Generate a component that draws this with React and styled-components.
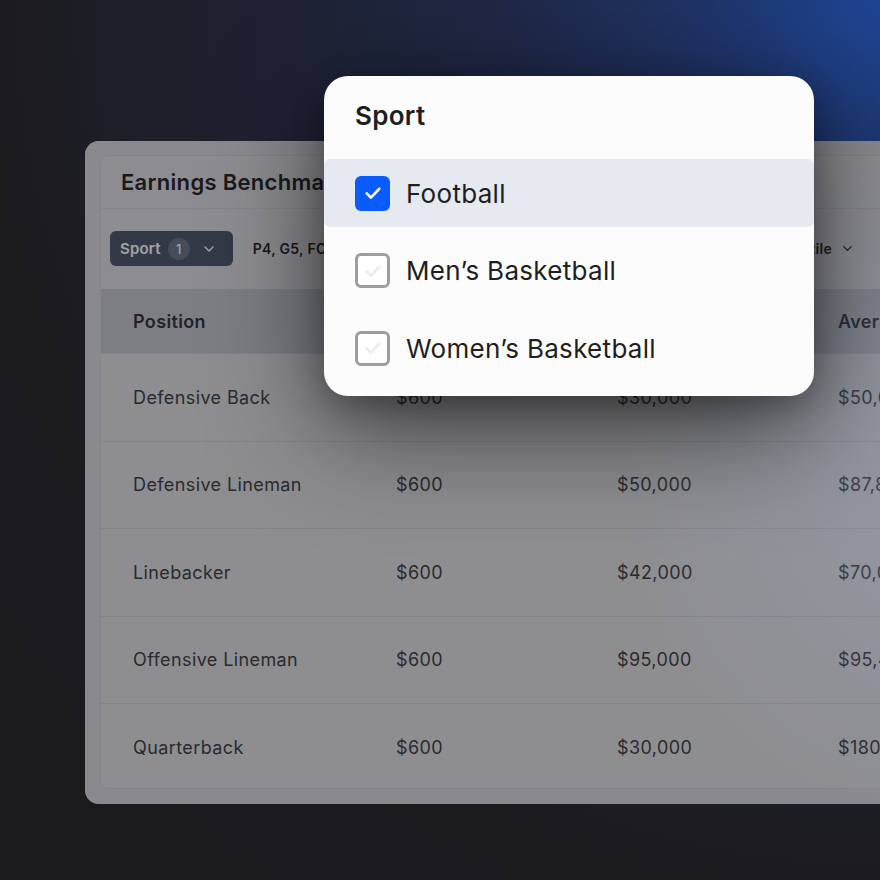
import React from 'react';
import styled, { createGlobalStyle } from 'styled-components';
import { ChevronDown } from 'lucide-react';

const GlobalStyle = createGlobalStyle`
  html, body {
    margin: 0;
    padding: 0;
    width: 880px;
    height: 880px;
    overflow: hidden;
  }
  body {
    font-family: Inter, "Noto Sans", sans-serif;
    background: #1b1b1e;
    -webkit-font-smoothing: antialiased;
  }
  #root {
    width: 880px;
    height: 880px;
  }
`;

const Stage = styled.div`
  position: relative;
  width: 880px;
  height: 880px;
  overflow: hidden;
  box-sizing: border-box;
  padding: 141px 0 0 85px;
  background: radial-gradient(
    circle farthest-corner at 100% 0%,
    #1e4595 0%,
    #1f3366 15%,
    #1f2846 30%,
    #1e2131 50%,
    #1c1c20 70%,
    #1b1b1e 100%
  );
`;

const Panel = styled.section`
  position: relative;
  width: 1100px;
  height: 663px;
  box-sizing: border-box;
  padding: 14px 15px 15px;
  background: #d9d9dc;
  border-radius: 14px;
  overflow: hidden;
`;

const Card = styled.div`
  height: 100%;
  box-sizing: border-box;
  display: flex;
  flex-direction: column;
  background: #dedee1;
  border: 1px solid #cfcfd5;
  border-radius: 8px;
  overflow: hidden;
`;

const CardHeader = styled.header`
  height: 52px;
  flex: none;
  display: flex;
  align-items: center;
  padding-left: 20px;
  border-bottom: 1px solid #cfcfd5;
`;

const Title = styled.h1`
  margin: 0;
  font-size: 22px;
  font-weight: 600;
  color: #1e1e20;
  letter-spacing: 0.3px;
`;

const FilterBar = styled.div`
  flex: none;
  display: flex;
  align-items: center;
  gap: 20px;
  padding: 22px 9px 23px;
`;

const Chip = styled.button`
  display: flex;
  align-items: center;
  gap: 7px;
  height: 35px;
  padding: 0 16px 0 10px;
  border: none;
  border-radius: 6px;
  background: #4a5368;
  color: #ffffff;
  font-family: inherit;
  font-size: 15px;
  font-weight: 600;
  letter-spacing: 0.2px;
`;

const Badge = styled.span`
  display: inline-flex;
  align-items: center;
  justify-content: center;
  width: 22px;
  height: 22px;
  border-radius: 50%;
  background: #6a7286;
  font-size: 13px;
  font-weight: 500;
  margin-right: 4px;
`;

const FilterItem = styled.div`
  display: flex;
  align-items: center;
  gap: 8px;
  white-space: nowrap;
  font-size: 14px;
  font-weight: 600;
  letter-spacing: 0.3px;
  color: #1e1e20;
`;

const Grid = styled.div`
  display: grid;
  grid-template-columns: 263px 221px 221px 221px 1fr;
`;

const HeadCell = styled.div`
  height: 64px;
  display: flex;
  align-items: center;
  padding-left: 32px;
  background: #c3c5cb;
  font-size: 18px;
  font-weight: 600;
  letter-spacing: 0.35px;
  color: #2e2e30;
  white-space: nowrap;
  overflow: hidden;
`;

const Cell = styled.div`
  height: 87.5px;
  box-sizing: border-box;
  display: flex;
  align-items: center;
  padding-left: 32px;
  border-top: 1px solid #ceced6;
  background: #dfdfe1;
  font-size: 18px;
  font-weight: 400;
  letter-spacing: 0.4px;
  color: #3a3a3c;
  white-space: nowrap;
  overflow: hidden;
`;

const Scrim = styled.div`
  position: absolute;
  inset: 0;
  pointer-events: none;
  background:
    radial-gradient(circle 340px at 880px 340px, rgba(170, 188, 235, 0.22), rgba(170, 188, 235, 0) 100%),
    rgba(20, 20, 26, 0.4);
`;

const Menu = styled.div`
  position: absolute;
  left: 324px;
  top: 76px;
  width: 490px;
  height: 320px;
  box-sizing: border-box;
  padding: 24px 0 0;
  background: #fcfcfc;
  border-radius: 24px;
  box-shadow: 0 30px 110px rgba(0, 0, 0, 0.62), 0 10px 32px rgba(0, 0, 0, 0.24);
`;

const MenuTitle = styled.div`
  padding-left: 31px;
  height: 32px;
  line-height: 32px;
  font-size: 26px;
  font-weight: 600;
  letter-spacing: 0.3px;
  color: #1f1f21;
`;

const OptionList = styled.div`
  margin-top: 27px;
  display: flex;
  flex-direction: column;
  gap: 9.5px;
`;

const Option = styled.label`
  height: 68px;
  display: flex;
  align-items: center;
  gap: 16px;
  padding-left: 31px;
  border-radius: 6px;
  background: ${(p) => (p.$active ? '#e6e9f0' : 'transparent')};
  font-size: 26px;
  font-weight: 400;
  letter-spacing: 0.3px;
  color: #1f1f21;
`;

const Box = styled.span`
  width: 35px;
  height: 35px;
  box-sizing: border-box;
  flex: none;
  display: flex;
  align-items: center;
  justify-content: center;
  border-radius: 6px;
  background: ${(p) => (p.$checked ? '#0a5cff' : '#ffffff')};
  border: ${(p) => (p.$checked ? 'none' : '3px solid #9e9ea0')};
`;

const Check = ({ color }) => (
  <svg width="20" height="20" viewBox="0 0 24 24" fill="none">
    <path d="M4.5 12.5l5 5L19.5 7" stroke={color} strokeWidth="3.2" strokeLinecap="round" strokeLinejoin="round" />
  </svg>
);

const rows = [
  ['Defensive Back', '$600', '$30,000', '$50,000', '$120,000'],
  ['Defensive Lineman', '$600', '$50,000', '$87,800', '$210,000'],
  ['Linebacker', '$600', '$42,000', '$70,000', '$165,000'],
  ['Offensive Lineman', '$600', '$95,000', '$95,400', '$240,000'],
  ['Quarterback', '$600', '$30,000', '$180,000', '$950,000'],
];

const headers = ['Position', 'Minimum', 'Median', 'Average', 'Maximum'];

const filters = ['P4, G5, FCS', 'All Positions', '2024–25 Academic Year', '50th Percentile'];

const sports = [
  { name: 'Football', checked: true },
  { name: 'Men’s Basketball', checked: false },
  { name: 'Women’s Basketball', checked: false },
];

export default function App() {
  return (
    <>
      <GlobalStyle />
      <Stage>
        <Panel>
          <Card>
            <CardHeader>
              <Title>Earnings Benchmarks</Title>
            </CardHeader>
            <FilterBar>
              <Chip>
                Sport
                <Badge>1</Badge>
                <ChevronDown size={16} strokeWidth={2.2} />
              </Chip>
              {filters.map((f) => (
                <FilterItem key={f}>
                  {f}
                  <ChevronDown size={15} strokeWidth={2.2} />
                </FilterItem>
              ))}
            </FilterBar>
            <Grid>
              {headers.map((h) => (
                <HeadCell key={h}>{h}</HeadCell>
              ))}
              {rows.map((r) =>
                r.map((v, i) => <Cell key={r[0] + i}>{v}</Cell>)
              )}
            </Grid>
          </Card>
          <Scrim />
        </Panel>
        <Menu>
          <MenuTitle>Sport</MenuTitle>
          <OptionList>
            {sports.map((s) => (
              <Option key={s.name} $active={s.checked}>
                <Box $checked={s.checked}>
                  <Check color={s.checked ? '#ffffff' : '#ececec'} />
                </Box>
                {s.name}
              </Option>
            ))}
          </OptionList>
        </Menu>
      </Stage>
    </>
  );
}
